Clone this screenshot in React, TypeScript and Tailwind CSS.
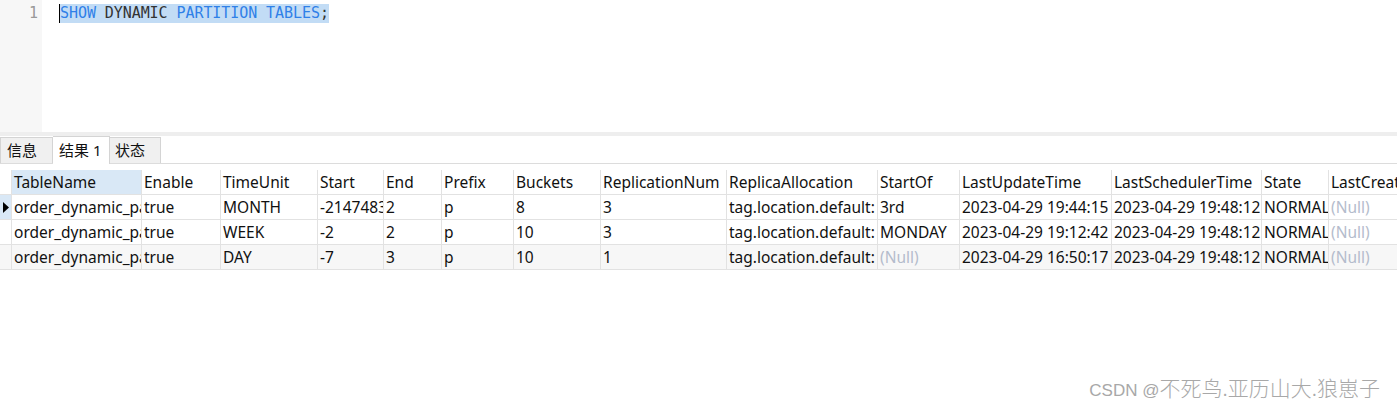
import React from "react";

const cols: { name: string; w: number }[] = [
  { name: "TableName", w: 130 },
  { name: "Enable", w: 79 },
  { name: "TimeUnit", w: 97 },
  { name: "Start", w: 66 },
  { name: "End", w: 58 },
  { name: "Prefix", w: 72 },
  { name: "Buckets", w: 87 },
  { name: "ReplicationNum", w: 126 },
  { name: "ReplicaAllocation", w: 151 },
  { name: "StartOf", w: 82 },
  { name: "LastUpdateTime", w: 152 },
  { name: "LastSchedulerTime", w: 150 },
  { name: "State", w: 67 },
  { name: "LastCreateTime", w: 120 },
];

const N = null;
const rows: (string | null)[][] = [
  ["order_dynamic_partition", "true", "MONTH", "-2147483648", "2", "p", "8", "3", "tag.location.default: 3", "3rd", "2023-04-29 19:44:15", "2023-04-29 19:48:12", "NORMAL", N],
  ["order_dynamic_partition", "true", "WEEK", "-2", "2", "p", "10", "3", "tag.location.default: 3", "MONDAY", "2023-04-29 19:12:42", "2023-04-29 19:48:12", "NORMAL", N],
  ["order_dynamic_partition", "true", "DAY", "-7", "3", "p", "10", "1", "tag.location.default: 1", N, "2023-04-29 16:50:17", "2023-04-29 19:48:12", "NORMAL", N],
];

const font = { fontFamily: '"Noto Sans", "Noto Sans CJK SC", sans-serif' };

export default function App() {
  return (
    <div className="w-[1397px] h-[409px] bg-white relative overflow-hidden" style={font}>
      {/* editor */}
      <div className="flex h-[132px]">
        <div className="w-[42px] bg-[#f7f7f7] flex justify-end pr-[4px] pt-[4px] text-[15px] leading-[18px] text-[#999]" style={{ fontFamily: '"DejaVu Sans Mono", monospace' }}>
          1
        </div>
        <div className="flex-1 pl-[17px] pt-[4px]">
          <div className="flex h-[19px] items-center">
            <span className="w-px h-[19px] bg-black" />
            <span
              className="bg-[#c2dcf5] text-[15px] leading-[19px] whitespace-pre tracking-[-0.07px]"
              style={{ fontFamily: '"DejaVu Sans Mono", monospace' }}
            >
              <span className="text-[#2f80e8]">SHOW</span>
              <span className="text-[#333]"> DYNAMIC </span>
              <span className="text-[#2f80e8]">PARTITION TABLES</span>
              <span className="text-[#333]">;</span>
            </span>
          </div>
        </div>
      </div>
      <div className="h-[4px] bg-[#eeeeee]" />
      {/* tabs */}
      <div className="flex h-[28px] items-end border-b border-[#dcdcdc] text-[15px] text-[#111]">
        <div className="w-[53px] h-[26px] bg-[#f0f0f0] border border-b-0 border-[#d4d4d4] flex items-center pl-[6px]">信息</div>
        <div className="w-[57px] h-[28px] bg-white border-t border-r border-[#d4d4d4] -mb-px flex items-center pl-[6px]">结果 1</div>
        <div className="w-[51px] h-[26px] bg-[#f0f0f0] border border-l-0 border-b-0 border-[#d4d4d4] flex items-center pl-[5px]">状态</div>
      </div>
      {/* grid */}
      <div className="mt-[6px] text-[15.5px] text-[#111]">
        <div className="flex h-[25px] border-b border-[#e2e2e2]">
          <div className="w-[12px] shrink-0 border-r border-[#e2e2e2]" />
          {cols.map((c, i) => (
            <div
              key={c.name}
              className={`shrink-0 border-r border-[#e2e2e2] overflow-hidden whitespace-nowrap pl-[2px] leading-[24px] ${i === 0 ? "bg-[#d9e8f6]" : ""}`}
              style={{ width: c.w }}
            >
              {c.name}
            </div>
          ))}
        </div>
        {rows.map((r, ri) => (
          <div key={ri} className={`flex h-[25px] border-b border-[#e2e2e2] ${ri === 2 ? "bg-[#f7f7f7]" : ""}`}>
            <div className={`w-[12px] shrink-0 border-r border-[#e2e2e2] flex items-center justify-center ${ri === 0 ? "bg-[#d9e8f6]" : ""}`}>
              {ri === 0 && (
                <svg width="6" height="11" viewBox="0 0 6 11">
                  <path d="M0 0 L6 5.5 L0 11 Z" fill="#000" />
                </svg>
              )}
            </div>
            {cols.map((c, ci) => (
              <div
                key={ci}
                className="shrink-0 border-r border-[#e2e2e2] overflow-hidden whitespace-nowrap pl-[2px] leading-[24px]"
                style={{ width: c.w }}
              >
                {r[ci] === null ? <span className="text-[#b4bccc]">(Null)</span> : r[ci]}
              </div>
            ))}
          </div>
        ))}
      </div>
      <div
        className="absolute right-[17px] top-[375px] text-[#a8a8a8] leading-[24px] whitespace-nowrap"
        style={{ fontFamily: '"Liberation Sans", "Noto Sans CJK SC", sans-serif' }}
      >
        <span className="text-[17px]">CSDN @</span>
        <span className="text-[21px] font-light" style={{ fontFamily: '"Noto Sans CJK SC", sans-serif' }}>
          不死鸟.亚历山大.狼崽子
        </span>
      </div>
    </div>
  );
}
